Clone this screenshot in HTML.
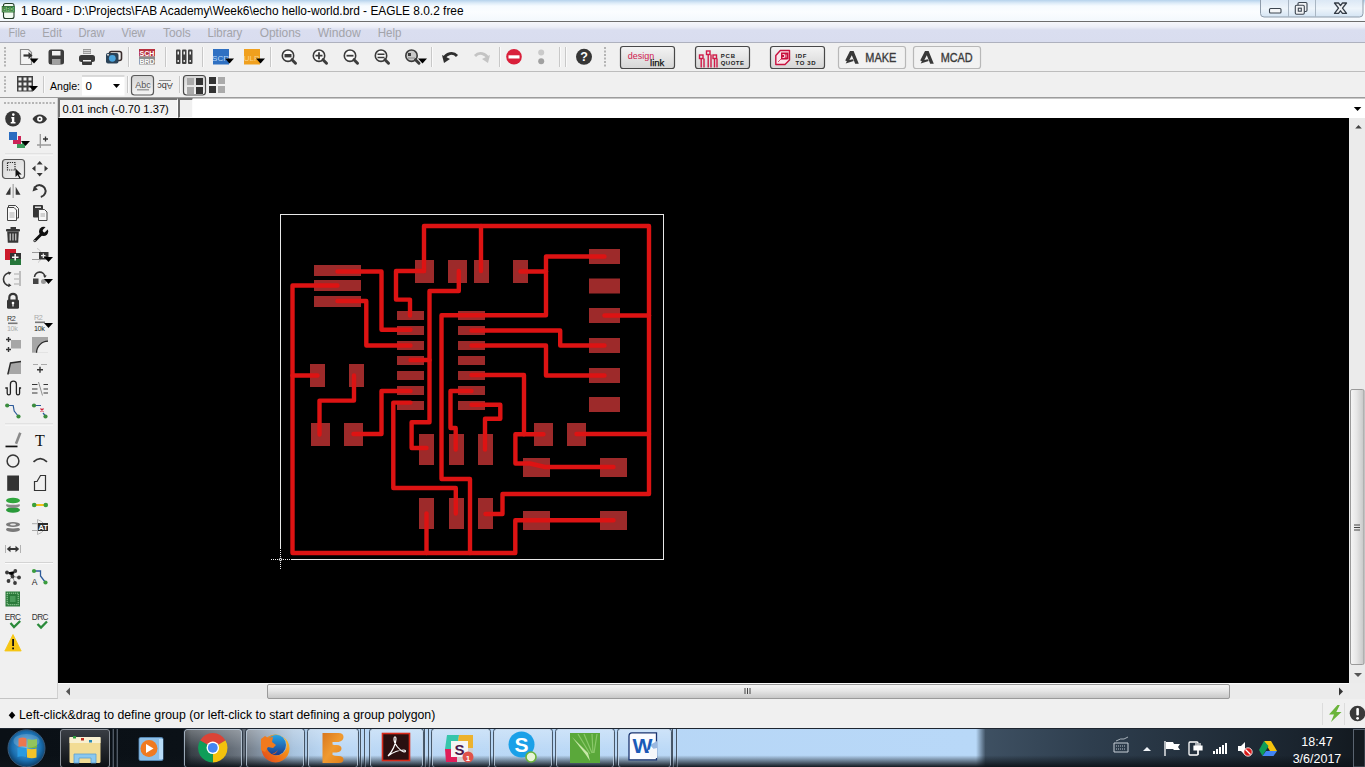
<!DOCTYPE html>
<html><head><meta charset="utf-8">
<style>
*{box-sizing:border-box}
html,body{margin:0;padding:0;width:1365px;height:767px;overflow:hidden;background:#f0f0f0;font-family:"Liberation Sans",sans-serif;position:relative}
.a{position:absolute}
.t{position:absolute;white-space:pre;line-height:1}
#title{left:0;top:0;width:1365px;height:21px;background:linear-gradient(#b5d2ec 0px,#dcebf8 3px,#f6fbff 6px,#fbfdff 12px,#f4f9fd 20px)}
#tline{left:0;top:21px;width:1365px;height:1px;background:#6d6d6d}
#menu{left:0;top:22px;width:1365px;height:20px;background:linear-gradient(#f6f7fb 0px,#eceef7 5px,#dadef0 8px,#d9ddef 19px)}
#mline{left:0;top:42px;width:1365px;height:1px;background:#aeb1be}
.mi{position:absolute;top:27px;font-size:12.5px;color:#a2a3a8;white-space:pre;line-height:1}
#tb1{left:0;top:43px;width:1365px;height:28px;background:#f0f0f0}
#tb1line{left:0;top:71px;width:1365px;height:1px;background:#bdbdbd;box-shadow:0 1px 0 #fdfdfd}
#tb2{left:0;top:72px;width:1365px;height:25px;background:#f0f0f0}
#tb2line{left:0;top:97px;width:1365px;height:1px;background:#9c9c9c;box-shadow:0 1px 0 #c4c4c4}
#cmd{left:193px;top:98px;width:1172px;height:20px;background:#fff;border-top:1px solid #c8c8c8}
#coord{left:58px;top:98px;width:120px;height:20px;background:#f2f2f2;border-left:2px solid #757575;border-top:2px solid #757575;border-right:1px solid #fcfcfc;border-bottom:1px solid #fcfcfc}
#coord2{left:178px;top:98px;width:15px;height:20px;background:#f0f0f0;border-left:2px solid #6a6a6a;border-top:2px solid #757575;border-right:1px solid #fcfcfc;border-bottom:1px solid #fcfcfc}
#canvas{left:58px;top:118px;width:1291px;height:565px;background:#000}
#vs{left:1349px;top:118px;width:16px;height:565px;background:#ebebeb}
#hs{left:58px;top:683px;width:1291px;height:16px;background:#ebebeb}
#lp{left:0;top:98px;width:58px;height:601px;background:#f0f0f0;border-right:1px solid #d0d0d0;border-bottom:1px solid #c4c4c4}
#status{left:0;top:699px;width:1365px;height:29px;background:#f0f0f0}
#task{left:0;top:728px;width:1365px;height:39px;background:#1b2530}
.sep{position:absolute;width:1px;background:#c9c9c9}
.hsep{position:absolute;height:1px;background:#cfcfcf}
</style></head><body>
<div id="title" class="a"></div>
<div id="tline" class="a"></div>
<div id="menu" class="a"></div>
<div id="mline" class="a"></div>
<div class="t" style="left:21px;top:6px;font-size:11.9px;color:#000">1 Board - D:\Projects\FAB Academy\Week6\echo hello-world.brd - EAGLE 8.0.2 free</div>
<svg width="420" height="45" style="position:absolute;left:0;top:0" font-family="Liberation Sans, sans-serif"><text x="8.6" y="36.6" font-size="12.4" fill="#a3a4aa" textLength="17.2" lengthAdjust="spacingAndGlyphs">File</text><text x="42.3" y="36.6" font-size="12.4" fill="#a3a4aa" textLength="19.5" lengthAdjust="spacingAndGlyphs">Edit</text><text x="78.5" y="36.6" font-size="12.4" fill="#a3a4aa" textLength="26.1" lengthAdjust="spacingAndGlyphs">Draw</text><text x="121.5" y="36.6" font-size="12.4" fill="#a3a4aa" textLength="23.9" lengthAdjust="spacingAndGlyphs">View</text><text x="163" y="36.6" font-size="12.4" fill="#a3a4aa" textLength="27.8" lengthAdjust="spacingAndGlyphs">Tools</text><text x="207.4" y="36.6" font-size="12.4" fill="#a3a4aa" textLength="34.9" lengthAdjust="spacingAndGlyphs">Library</text><text x="259.7" y="36.6" font-size="12.4" fill="#a3a4aa" textLength="41.1" lengthAdjust="spacingAndGlyphs">Options</text><text x="317.7" y="36.6" font-size="12.4" fill="#a3a4aa" textLength="43.1" lengthAdjust="spacingAndGlyphs">Window</text><text x="377.7" y="36.6" font-size="12.4" fill="#a3a4aa" textLength="23.8" lengthAdjust="spacingAndGlyphs">Help</text></svg>
<div id="tb1" class="a"></div>
<div id="tb1line" class="a"></div>
<div id="tb2" class="a"></div>
<div id="tb2line" class="a"></div>
<div id="lp" class="a"></div>
<div id="coord" class="a"></div>
<div id="coord2" class="a"></div>
<div id="cmd" class="a"></div>
<div class="t" style="left:62.5px;top:103.8px;font-size:11.2px;color:#000">0.01 inch (-0.70 1.37)</div>
<div id="canvas" class="a"></div>
<div id="vs" class="a"></div>
<div id="hs" class="a"></div>
<div id="status" class="a"></div>
<div class="t" style="left:19px;top:709px;font-size:12.3px;color:#000">Left-click&amp;drag to define group (or left-click to start defining a group polygon)</div>
<div id="task" class="a"></div>
<svg width="1365" height="767" style="position:absolute;left:0;top:0" font-family="Liberation Sans, sans-serif">
<rect x="4" y="47" width="2" height="2" fill="#b4b4b4"/>
<rect x="4" y="50.5" width="2" height="2" fill="#b4b4b4"/>
<rect x="4" y="54.0" width="2" height="2" fill="#b4b4b4"/>
<rect x="4" y="57.5" width="2" height="2" fill="#b4b4b4"/>
<rect x="4" y="61.0" width="2" height="2" fill="#b4b4b4"/>
<rect x="4" y="64.5" width="2" height="2" fill="#b4b4b4"/>
<rect x="4" y="76" width="2" height="2" fill="#b4b4b4"/>
<rect x="4" y="79.5" width="2" height="2" fill="#b4b4b4"/>
<rect x="4" y="83.0" width="2" height="2" fill="#b4b4b4"/>
<rect x="4" y="86.5" width="2" height="2" fill="#b4b4b4"/>
<rect x="4" y="90.0" width="2" height="2" fill="#b4b4b4"/>
<rect x="604" y="47" width="2" height="2" fill="#b4b4b4"/>
<rect x="604" y="50.5" width="2" height="2" fill="#b4b4b4"/>
<rect x="604" y="54.0" width="2" height="2" fill="#b4b4b4"/>
<rect x="604" y="57.5" width="2" height="2" fill="#b4b4b4"/>
<rect x="604" y="61.0" width="2" height="2" fill="#b4b4b4"/>
<rect x="604" y="64.5" width="2" height="2" fill="#b4b4b4"/>
<rect x="4" y="102" width="2" height="2" fill="#b4b4b4"/>
<rect x="7.5" y="102" width="2" height="2" fill="#b4b4b4"/>
<rect x="11.0" y="102" width="2" height="2" fill="#b4b4b4"/>
<rect x="14.5" y="102" width="2" height="2" fill="#b4b4b4"/>
<rect x="18.0" y="102" width="2" height="2" fill="#b4b4b4"/>
<rect x="21.5" y="102" width="2" height="2" fill="#b4b4b4"/>
<rect x="25.0" y="102" width="2" height="2" fill="#b4b4b4"/>
<rect x="28.5" y="102" width="2" height="2" fill="#b4b4b4"/>
<rect x="32.0" y="102" width="2" height="2" fill="#b4b4b4"/>
<rect x="35.5" y="102" width="2" height="2" fill="#b4b4b4"/>
<rect x="39.0" y="102" width="2" height="2" fill="#b4b4b4"/>
<rect x="42.5" y="102" width="2" height="2" fill="#b4b4b4"/>
<rect x="46.0" y="102" width="2" height="2" fill="#b4b4b4"/>
<rect x="49.5" y="102" width="2" height="2" fill="#b4b4b4"/>
<rect x="53.0" y="102" width="2" height="2" fill="#b4b4b4"/>
<rect x="128" y="47" width="1" height="20" fill="#c8c8c8"/><rect x="129" y="47" width="1" height="20" fill="#fafafa"/>
<rect x="165" y="47" width="1" height="20" fill="#c8c8c8"/><rect x="166" y="47" width="1" height="20" fill="#fafafa"/>
<rect x="202" y="47" width="1" height="20" fill="#c8c8c8"/><rect x="203" y="47" width="1" height="20" fill="#fafafa"/>
<rect x="270" y="47" width="1" height="20" fill="#c8c8c8"/><rect x="271" y="47" width="1" height="20" fill="#fafafa"/>
<rect x="431" y="47" width="1" height="20" fill="#c8c8c8"/><rect x="432" y="47" width="1" height="20" fill="#fafafa"/>
<rect x="499" y="47" width="1" height="20" fill="#c8c8c8"/><rect x="500" y="47" width="1" height="20" fill="#fafafa"/>
<rect x="559" y="47" width="1" height="20" fill="#c8c8c8"/><rect x="560" y="47" width="1" height="20" fill="#fafafa"/>
<rect x="565" y="47" width="1" height="20" fill="#c8c8c8"/><rect x="566" y="47" width="1" height="20" fill="#fafafa"/>
<rect x="43" y="76" width="1" height="17" fill="#c8c8c8"/><rect x="44" y="76" width="1" height="17" fill="#fafafa"/>
<rect x="127" y="76" width="1" height="17" fill="#c8c8c8"/><rect x="128" y="76" width="1" height="17" fill="#fafafa"/>
<rect x="179" y="76" width="1" height="17" fill="#c8c8c8"/><rect x="180" y="76" width="1" height="17" fill="#fafafa"/>
<path d="M20.5,49.5h8l3,3v12h-11z" fill="#f4f4f4" stroke="#8a8a8a" stroke-width="1.2"/>
<path d="M23.5,55.5h6" stroke="#333" stroke-width="2.2"/><path d="M28.5,52l4,3.5l-4,3.5z" fill="#333"/>
<path d="M29.5,58.5h9l-4.5,5z" fill="#000"/>
<rect x="48.5" y="49.5" width="15.5" height="15" rx="2.5" fill="#3c3c3c"/>
<rect x="52" y="51" width="8.5" height="4.5" fill="#f0f0f0"/><rect x="52" y="59" width="8.5" height="5.5" fill="#a0a0a0"/>
<rect x="83" y="49" width="8" height="5" fill="#9a9a9a"/><path d="M83.5,50.5h7M83.5,52.5h7" stroke="#f0f0f0" stroke-width="0.7"/>
<rect x="79" y="55" width="16" height="7" rx="2.5" fill="#3a3a3a"/><rect x="82" y="61" width="10" height="4" rx="1" fill="#3a3a3a"/><rect x="83" y="60" width="8" height="1.5" fill="#f0f0f0"/>
<rect x="109.5" y="51.5" width="12" height="9" rx="2" fill="none" stroke="#3a2e2e" stroke-width="1.6"/>
<rect x="106" y="53" width="12.5" height="10.5" rx="2" fill="#2b4257"/><circle cx="112.3" cy="58.3" r="3.4" fill="#4aa3dc"/><rect x="107" y="54" width="2" height="1.5" fill="#d0d0d0"/>
<rect x="139" y="49" width="16" height="7.5" fill="#b7303e"/><rect x="139" y="56.5" width="16" height="8" fill="#8c8c8c"/>
<text x="147" y="55.6" font-size="7" font-weight="bold" fill="#fff" text-anchor="middle">SCH</text><text x="147" y="63.5" font-size="7" font-weight="bold" fill="#fff" text-anchor="middle">BRD</text>
<rect x="176" y="49.5" width="4.5" height="14.5" rx="1" fill="#404040"/><rect x="177.5" y="51.5" width="1.5" height="3" fill="#f0f0f0"/><rect x="177.5" y="60" width="1.5" height="2" fill="#e0e0e0"/>
<rect x="182" y="49.5" width="4.5" height="14.5" rx="1" fill="#404040"/><rect x="183.5" y="51.5" width="1.5" height="3" fill="#f0f0f0"/><rect x="183.5" y="60" width="1.5" height="2" fill="#e0e0e0"/>
<rect x="188" y="49.5" width="4.5" height="14.5" rx="1" fill="#404040"/><rect x="189.5" y="51.5" width="1.5" height="3" fill="#f0f0f0"/><rect x="189.5" y="60" width="1.5" height="2" fill="#e0e0e0"/>
<rect x="213" y="49" width="16" height="15.5" fill="#2f70c2"/><text x="220.5" y="60.5" font-size="8" fill="#b8d8f8" text-anchor="middle">SCR</text>
<path d="M225,58.5h9l-4.5,5z" fill="#000"/>
<rect x="244" y="49" width="16" height="15.5" fill="#f0a01e"/><text x="251.5" y="60.5" font-size="8" fill="#fbd38a" text-anchor="middle">ULP</text>
<path d="M256,58.5h9l-4.5,5z" fill="#000"/>
<circle cx="288" cy="55.7" r="5.7" fill="#fafafa" stroke="#3a3a3a" stroke-width="1.6"/>
<path d="M292,59.7l3.5,3.5" stroke="#3c3c3c" stroke-width="3" stroke-linecap="round"/>
<rect x="284.5" y="54" width="7" height="3.4" fill="#3c3c3c"/>
<circle cx="319" cy="55.7" r="5.7" fill="#fafafa" stroke="#3a3a3a" stroke-width="1.6"/>
<path d="M323,59.7l3.5,3.5" stroke="#3c3c3c" stroke-width="3" stroke-linecap="round"/>
<path d="M315.5,55.7h7M319,52.2v7" stroke="#3c3c3c" stroke-width="1.8"/>
<circle cx="350" cy="55.7" r="5.7" fill="#fafafa" stroke="#3a3a3a" stroke-width="1.6"/>
<path d="M354,59.7l3.5,3.5" stroke="#3c3c3c" stroke-width="3" stroke-linecap="round"/>
<path d="M346.5,55.7h7" stroke="#3c3c3c" stroke-width="1.8"/>
<circle cx="381" cy="55.7" r="5.7" fill="#fafafa" stroke="#3a3a3a" stroke-width="1.6"/>
<path d="M385,59.7l3.5,3.5" stroke="#3c3c3c" stroke-width="3" stroke-linecap="round"/>
<path d="M377.5,54.2h7M377.5,57.4h7" stroke="#3c3c3c" stroke-width="1.5"/>
<circle cx="411.5" cy="55.7" r="5.7" fill="#c8c8c8" stroke="#3a3a3a" stroke-width="1.6"/>
<path d="M415.5,59.7l3.5,3.5" stroke="#3c3c3c" stroke-width="3" stroke-linecap="round"/>
<rect x="408" y="53" width="3" height="3" fill="#3c3c3c"/><path d="M408,58h7" stroke="#888" stroke-width="1"/>
<path d="M418,58.5h9l-4.5,5z" fill="#000"/>
<path d="M444,58.5c2-5,9-7,13-2.5" fill="none" stroke="#2e2e2e" stroke-width="2.8"/><path d="M442,55l2,8l6-4z" fill="#2e2e2e"/>
<path d="M488,58.5c-2-5,-9-7,-13-2.5" fill="none" stroke="#c4c4c4" stroke-width="2.8"/><path d="M490,55l-2,8l-6-4z" fill="#c4c4c4"/>
<circle cx="514" cy="56.8" r="7.8" fill="#d91f3a"/><rect x="508.5" y="55.3" width="11" height="3.2" fill="#fff"/>
<circle cx="541.2" cy="52.4" r="3" fill="#cacaca"/><circle cx="541.2" cy="61.3" r="3" fill="#a0a0a0"/>
<circle cx="584" cy="56.8" r="8" fill="#363636"/><text x="584" y="61.3" font-size="12.5" font-weight="bold" fill="#fff" text-anchor="middle">?</text>
<defs><linearGradient id="gbtn" x1="0" y1="0" x2="0" y2="1"><stop offset="0" stop-color="#f4f4f4"/><stop offset="1" stop-color="#d6d6d6"/></linearGradient><linearGradient id="gbtn2" x1="0" y1="0" x2="0" y2="1"><stop offset="0" stop-color="#d4d4d4"/><stop offset="1" stop-color="#f6f6f6"/></linearGradient></defs>
<rect x="620.5" y="46.5" width="54" height="22" rx="2.5" fill="url(#gbtn)" stroke="#484848" stroke-width="1.2"/>
<rect x="695.5" y="46.5" width="54" height="22" rx="2.5" fill="url(#gbtn)" stroke="#484848" stroke-width="1.2"/>
<rect x="770.5" y="46.5" width="54" height="22" rx="2.5" fill="url(#gbtn)" stroke="#484848" stroke-width="1.2"/>
<rect x="838.5" y="46.5" width="67" height="22" rx="2.5" fill="#f2f2f2" stroke="#b8b8b8" stroke-width="1.2"/>
<rect x="913.5" y="46.5" width="67" height="22" rx="2.5" fill="#f2f2f2" stroke="#b8b8b8" stroke-width="1.2"/>
<text x="627.8" y="58.5" font-size="9.5" fill="#d0204e" textLength="26.5" lengthAdjust="spacingAndGlyphs">design</text><text x="650" y="65.8" font-size="9.5" fill="#111" stroke="#111" stroke-width="0.25" textLength="14.4" lengthAdjust="spacingAndGlyphs">link</text>
<g fill="none" stroke="#d01a48" stroke-width="1.4"><rect x="699.5" y="55" width="3.5" height="3.5"/><rect x="706.5" y="51" width="3.5" height="3.5"/><rect x="713" y="55" width="3.5" height="3.5"/><path d="M701.2,58.5v9M704,58.5v9M708.2,54.5v13M711,54.5v13M714.5,58.5v9M717,58.5v9"/></g>
<text x="720.7" y="57.9" font-size="6" font-weight="bold" fill="#222" textLength="14.3" lengthAdjust="spacing">PCB</text><text x="720.7" y="64.8" font-size="6" font-weight="bold" fill="#222" textLength="23.3" lengthAdjust="spacing">QUOTE</text>
<path d="M775.8,55.5l4.5,-5h9.2v9.5l-4.5,4.5h-9.2z" fill="#fbe4ea" stroke="#c8103e" stroke-width="1.4" stroke-linejoin="round"/><rect x="781" y="52.5" width="7.5" height="6.8" fill="#c8103e"/><path d="M782.5,54.5h2v3M786,54.5v3M784.5,57.5h-2" stroke="#fff" stroke-width="0.8" fill="none"/><path d="M778,62l3,-3h6" stroke="#c8103e" stroke-width="0.7" fill="none"/>
<text x="795.5" y="57.9" font-size="6" font-weight="bold" fill="#222" textLength="11" lengthAdjust="spacing">IDF</text><text x="795.5" y="64.8" font-size="6" font-weight="bold" fill="#222" textLength="20" lengthAdjust="spacing">TO 3D</text>
<path d="M845.2,60.5l4.8,-9.5h3.6l5.2,12.8h-3.6l-3.4,-8.6l-3.3,6.5z" fill="#383838"/><path d="M845.7,63.5l1.5,-3l5.5,-1.2l1,1.6z" fill="#383838"/>
<path d="M920.2,60.5l4.8,-9.5h3.6l5.2,12.8h-3.6l-3.4,-8.6l-3.3,6.5z" fill="#383838"/><path d="M920.7,63.5l1.5,-3l5.5,-1.2l1,1.6z" fill="#383838"/>
<text x="865.3" y="62" font-size="12.5" fill="#3a3a3a" stroke="#3a3a3a" stroke-width="0.35" textLength="31" lengthAdjust="spacingAndGlyphs">MAKE</text>
<text x="940.7" y="62" font-size="12.5" fill="#3a3a3a" stroke="#3a3a3a" stroke-width="0.35" textLength="32" lengthAdjust="spacingAndGlyphs">MCAD</text>
<rect x="17" y="76" width="16" height="15.5" fill="#404040"/>
<rect x="18.5" y="77.5" width="3" height="3" fill="#f0f0f0"/>
<rect x="18.5" y="82.5" width="3" height="3" fill="#f0f0f0"/>
<rect x="18.5" y="87.5" width="3" height="3" fill="#f0f0f0"/>
<rect x="23.5" y="77.5" width="3" height="3" fill="#f0f0f0"/>
<rect x="23.5" y="82.5" width="3" height="3" fill="#f0f0f0"/>
<rect x="23.5" y="87.5" width="3" height="3" fill="#f0f0f0"/>
<rect x="28.5" y="77.5" width="3" height="3" fill="#f0f0f0"/>
<rect x="28.5" y="82.5" width="3" height="3" fill="#f0f0f0"/>
<rect x="28.5" y="87.5" width="3" height="3" fill="#f0f0f0"/>
<path d="M29,86h9l-4.5,5z" fill="#000"/>
<text x="50" y="89.8" font-size="11.5" fill="#000" textLength="30" lengthAdjust="spacingAndGlyphs">Angle:</text>
<rect x="82" y="75.5" width="42.5" height="20" fill="#fff"/><rect x="82" y="75.5" width="42.5" height="1" fill="#b8b8b8"/>
<text x="85.5" y="89.8" font-size="11.5" fill="#000">0</text>
<path d="M113,84h7l-3.5,4z" fill="#000"/>
<rect x="131.5" y="75.5" width="22" height="19.5" rx="3" fill="url(#gbtn2)" stroke="#5a5a5a" stroke-width="1.2"/>
<text x="143" y="87.6" font-size="9" fill="#555" text-anchor="middle">Abc</text><rect x="137" y="89.2" width="12" height="1.2" fill="#8a8a8a"/>
<g transform="translate(165,86.2) rotate(180)"><text x="0" y="3.3" font-size="9" fill="#333" text-anchor="middle">Abc</text></g><rect x="159" y="80" width="12" height="1" fill="#8a8a8a"/>
<rect x="183.5" y="75.5" width="22" height="19.5" rx="3" fill="url(#gbtn2)" stroke="#4a4a4a" stroke-width="1.2"/>
<rect x="187" y="78" width="7" height="7" fill="#aaaaaa"/><rect x="196" y="78" width="7" height="7" fill="#333"/><rect x="187" y="87" width="7" height="7" fill="#aaaaaa"/><rect x="196" y="87" width="7" height="7" fill="#333"/>
<rect x="209" y="77" width="7" height="7" fill="#333"/><rect x="218" y="77" width="7" height="7" fill="#aaaaaa"/><rect x="209" y="86" width="7" height="7" fill="#333"/><rect x="218" y="86" width="7" height="7" fill="#aaaaaa"/>
</svg><svg width="1365" height="767" style="position:absolute;left:0;top:0" font-family="Liberation Sans, sans-serif">
<rect x="5" y="153.5" width="48" height="1" fill="#d4d4d4"/><rect x="5" y="154.5" width="48" height="1" fill="#fbfbfb"/>
<rect x="5" y="423.5" width="48" height="1" fill="#d4d4d4"/><rect x="5" y="424.5" width="48" height="1" fill="#fbfbfb"/>
<rect x="5" y="562" width="48" height="1" fill="#d4d4d4"/><rect x="5" y="563" width="48" height="1" fill="#fbfbfb"/>
<circle cx="13" cy="118.7" r="7.8" fill="#363636"/><circle cx="13.3" cy="114.6" r="1.3" fill="#fff"/><path d="M11.3,117h3v5h1.2v1.5h-4.8v-1.5h1.2v-3.5h-0.6z" fill="#fff"/>
<path d="M32.5,119c3-6,11.5-6,14.5,0c-3,6-11.5,6-14.5,0z" fill="#363636"/><circle cx="39.8" cy="119" r="2.7" fill="#fff"/><circle cx="39.8" cy="119" r="1.1" fill="#363636"/>
<rect x="9" y="132" width="8" height="8" fill="#2a6cc0"/><path d="M13,140h5v-4h3v8h-8z" fill="#cc2457"/><path d="M17,144h5v-3h3v7h-8z" fill="#3c9a5c"/><path d="M21,141h9l-4.5,5z" fill="#000"/>
<path d="M40.3,134v14M37,145h14" stroke="#9a9a9a" stroke-width="1.3"/><path d="M43,139h5M45.5,136.5v5" stroke="#333" stroke-width="1.3"/>
<defs><linearGradient id="gsel" x1="0" y1="0" x2="1" y2="1"><stop offset="0" stop-color="#d4d4d4"/><stop offset="1" stop-color="#f2f2f2"/></linearGradient></defs>
<rect x="2.5" y="159.5" width="22" height="19" rx="3" fill="url(#gsel)" stroke="#555" stroke-width="1.2"/>
<rect x="7.5" y="162.5" width="7.5" height="7.5" fill="none" stroke="#222" stroke-width="1.2" stroke-dasharray="1.2,1"/>
<path d="M15.5,168.5l0,8.5l2-2l2,3.5l1.2-0.7l-2-3.3h3z" fill="#111"/>
<g fill="#363636"><path d="M39.7,161l-3,3.5h6z"/><path d="M39.7,176.5l-3,-3.5h6z"/><path d="M32,168.6l3.5,-3v6z"/><path d="M48,168.6l-3.5,-3v6z"/></g>
<path d="M5.7,194.8l4.8,-8v8z" fill="#363636"/><path d="M20.5,194.8l-4.8,-8v8z" fill="#363636"/><rect x="12.5" y="184" width="1.3" height="14" fill="#a8a8a8"/>
<path d="M34.8,187.5a6,6 0 1 1 6,9.5" fill="none" stroke="#363636" stroke-width="2"/><path d="M32.5,191.5l1.5,-5.5l4,3.5z" fill="#363636"/>
<path d="M8.5,205.5h7l3,3v9.5h-10z" fill="#f4f4f4" stroke="#444" stroke-width="1"/>
<path d="M7.5,207.5h6.5l2.5,2.5v10.5h-9z" fill="#f8f8f8" stroke="#444" stroke-width="1"/><path d="M9.5,213h5M9.5,215h5M9.5,217h5" stroke="#999" stroke-width="0.8"/>
<rect x="33" y="205" width="10" height="12.5" rx="1" fill="#363636"/><rect x="35" y="206.5" width="6" height="1.5" fill="#ddd"/>
<path d="M38.5,209.5h6l2.5,2.5v8.5h-8.5z" fill="#f6f6f6" stroke="#444" stroke-width="1"/><path d="M40.5,214h4.5M40.5,216h4.5" stroke="#999" stroke-width="0.8"/>
<rect x="10.5" y="227" width="5.5" height="2.5" fill="#363636"/><rect x="6" y="229" width="14" height="2.5" rx="0.8" fill="#363636"/><path d="M7.2,231.5h11.6l-0.6,11.2h-10.4z" fill="#363636"/>
<path d="M10.2,233.5v7M13,233.5v7M15.8,233.5v7" stroke="#f0f0f0" stroke-width="1"/>
<path d="M34.8,240.8l7.5,-7.5" stroke="#111" stroke-width="2.8" stroke-linecap="round"/><circle cx="43.6" cy="231.4" r="4.6" fill="#111"/><path d="M44.3,230.7l5,-5" stroke="#f0f0f0" stroke-width="3.2" stroke-linecap="round"/><circle cx="34.9" cy="240.7" r="0.7" fill="#f0f0f0"/>
<rect x="5" y="249" width="11" height="11" fill="#cc1a2b"/><rect x="10" y="253" width="11" height="6" fill="#333"/><rect x="10" y="259" width="11" height="6" fill="#26763a"/><path d="M12,257.3h6.5M15.2,254v6.5" stroke="#f4f4f4" stroke-width="1.6"/>
<path d="M32,252.5h7M32,259.5h7" stroke="#9a9a9a" stroke-width="1"/><path d="M37,248.5c5,1,6,11,1,14" fill="none" stroke="#bbb" stroke-width="0.8"/>
<rect x="39" y="252" width="9.5" height="7.5" fill="#363636"/><path d="M41,255.7h4.5M43.3,253.5v4.5" stroke="#f0f0f0" stroke-width="1.2"/><path d="M44,257h9l-4.5,5z" fill="#000"/>
<path d="M10.2,272.8a6,6 0 0 0 -0.5,13" fill="none" stroke="#363636" stroke-width="1.6"/><path d="M8,271.5l3.5,1l-2.5,2.5z M8,287l3.5,-1.5l-2.8,-2.2z" fill="#363636"/>
<path d="M14,274h5M14,279h5M14,284h5" stroke="#aaa" stroke-width="1.2"/><rect x="19" y="271" width="2" height="15" fill="#bdbdbd"/>
<path d="M34.5,277a5.3,5.3 0 0 1 10.5,-0.5" fill="none" stroke="#363636" stroke-width="1.6"/><path d="M43,275.5h3.8l-2,2.5z" fill="#363636"/><rect x="33" y="278.5" width="5.5" height="5.5" fill="#444"/><circle cx="43.5" cy="281.5" r="2.5" fill="#999"/><path d="M44,279h9l-4.5,5z" fill="#000"/>
<path d="M9.3,300v-2.5a3.7,3.7 0 0 1 7.4,0v2.5" fill="none" stroke="#363636" stroke-width="2.2"/><rect x="7" y="299.5" width="12" height="9.3" rx="1.5" fill="#363636"/><circle cx="13" cy="303" r="1.3" fill="#fff"/><rect x="12.4" y="303" width="1.2" height="3.5" fill="#fff"/>
<text x="7" y="320.8" font-size="7.2" fill="#333" letter-spacing="-0.4">R2</text><rect x="8" y="322.5" width="9.5" height="1.6" fill="#777"/><text x="7" y="331" font-size="7.2" fill="#aaa" letter-spacing="-0.4">10k</text>
<text x="34" y="320.3" font-size="7.2" fill="#aaa" letter-spacing="-0.4">R2</text><rect x="35" y="321.5" width="10" height="1.6" fill="#777"/><text x="34" y="330.5" font-size="7.2" fill="#222" letter-spacing="-0.4">10k</text><path d="M44,323h9l-4.5,5z" fill="#000"/>
<path d="M6,339.5h5M8.5,337v5M6,349.5h5M8.5,347v5" stroke="#363636" stroke-width="1.4"/><rect x="11" y="340" width="10" height="8.5" fill="#a6a6a6"/>
<rect x="32" y="337" width="16" height="15.7" fill="#a6a6a6"/><path d="M36.5,352.7a11.7,11.7 0 0 1 11.5,-11.5v11.5z" fill="#f0f0f0"/><path d="M36.5,352.7a11.7,11.7 0 0 1 11.5,-11.5" fill="none" stroke="#2a2a2a" stroke-width="1.3"/>
<path d="M10.5,363l10.5,-1.5v12.5h-13.5z" fill="#a6a6a6"/><path d="M7.8,374.5l2.7,-11.5l10.5,-1.5" fill="none" stroke="#2a2a2a" stroke-width="1.4"/>
<path d="M33,364.5h5M41,364.5h6" stroke="#aaa" stroke-width="1.1"/><path d="M37,369.7h6M40,366.7v6" stroke="#363636" stroke-width="1.4"/>
<path d="M5.3,388h1.9v5.2a1.6,1.6 0 0 0 3.2,0v-9a3,3 0 0 1 6,0v9a1.6,1.6 0 0 0 3.2,0v-5.2h1.5" fill="none" stroke="#222" stroke-width="1.3"/>
<path d="M32,384.5h5.5M32,389h5.5M32,393h5.5M43.5,384.5h4.5M43.5,389h4.5M43.5,393h4.5" stroke="#363636" stroke-width="1.2"/><path d="M38.5,382l4,13.5" stroke="#777" stroke-width="0.8"/>
<path d="M7.2,405.5h6l1,5.5l4.3,5.5" fill="none" stroke="#2c5a9a" stroke-width="1.2"/><circle cx="7.2" cy="405.5" r="2.1" fill="#3b8c3e"/><circle cx="18.5" cy="416.5" r="2.1" fill="#3b8c3e"/>
<path d="M34,405.5h7M43,413l3,3.5" fill="none" stroke="#2c5a9a" stroke-width="1.2"/><path d="M40.5,408.5l3,3M43.5,408.5l-3,3" stroke="#d0203a" stroke-width="1.2"/><circle cx="34" cy="405.5" r="2.1" fill="#3b8c3e"/><circle cx="45.5" cy="416.5" r="2.1" fill="#3b8c3e"/>
<rect x="5.5" y="445.6" width="12" height="1.7" fill="#111"/><path d="M20.3,432.8l-4.3,11" stroke="#8a8a8a" stroke-width="2.6"/>
<text x="40" y="445.5" font-family="Liberation Serif, serif" font-size="16" fill="#111" text-anchor="middle">T</text>
<circle cx="13" cy="461" r="5.9" fill="none" stroke="#363636" stroke-width="1.5"/><path d="M33.5,461.8q6.7,-6.5 13.5,0" fill="none" stroke="#363636" stroke-width="1.7"/>
<rect x="7.2" y="475.5" width="11.8" height="15.3" fill="#333"/><path d="M34.5,490.5v-9h2.5l3.5,-6h5v15z" fill="none" stroke="#333" stroke-width="1.2"/>
<ellipse cx="13" cy="510" rx="7" ry="2.8" fill="#2a9a3a"/><ellipse cx="13" cy="505.3" rx="7" ry="2.6" fill="#8a8a8a"/><ellipse cx="13" cy="503.5" rx="7" ry="1.3" fill="#f4f4f4"/><ellipse cx="13" cy="500.5" rx="7" ry="2.8" fill="#2fa63c"/>
<path d="M34.2,505h11.6" stroke="#f2c21a" stroke-width="2"/><circle cx="34.2" cy="505" r="2.3" fill="#3aa03a"/><circle cx="45.8" cy="505" r="2.3" fill="#3aa03a"/>
<ellipse cx="13" cy="529.5" rx="7" ry="2.6" fill="#7a7a7a"/><ellipse cx="13" cy="527.2" rx="7" ry="1.2" fill="#f0f0f0"/><ellipse cx="13" cy="524.5" rx="7" ry="2.6" fill="#7a7a7a"/><ellipse cx="13" cy="524.5" rx="3" ry="1" fill="#e8e8e8"/>
<path d="M32,523.7h6M32,530.5h6" stroke="#aaa" stroke-width="1"/><path d="M37.5,519.5v15M37.5,519.5q5,2 6,4M37.5,534.5q5,-2 6,-4" fill="none" stroke="#aaa" stroke-width="0.8"/><rect x="38" y="523" width="10" height="8" fill="#2a2a2a"/><text x="43" y="530.3" font-size="7.5" font-weight="bold" fill="#fff" text-anchor="middle" letter-spacing="-0.3">AT</text>
<path d="M9,549h8" stroke="#363636" stroke-width="2"/><path d="M6.8,549l3.7,-3.3v6.6z M19.2,549l-3.7,-3.3v6.6z" fill="#363636"/><path d="M5.5,545v8M20.5,545v8" stroke="#aaa" stroke-width="0.9"/>
<path d="M7,572.5L12.5,576.5L15.3,571M12.5,576.5L19,577.5M12.5,576.5L8.5,581M12.5,576.5L15,583" stroke="#777" stroke-width="0.8"/>
<circle cx="7" cy="572.5" r="1.9" fill="#3a3a3a"/>
<circle cx="15.3" cy="571" r="1.9" fill="#3a3a3a"/>
<circle cx="19" cy="577.5" r="1.9" fill="#3a3a3a"/>
<circle cx="8.5" cy="581" r="1.9" fill="#3a3a3a"/>
<circle cx="15" cy="583" r="1.9" fill="#3a3a3a"/>
<circle cx="12.5" cy="576.5" r="1.9" fill="#3a3a3a"/>
<path d="M34,571h6.5v5l5,6.5" fill="none" stroke="#2c5a9a" stroke-width="1.3"/><circle cx="34" cy="571" r="2.1" fill="#3b9c3e"/><circle cx="45.5" cy="582.5" r="2.1" fill="#3b9c3e"/><text x="34.5" y="585" font-size="8.5" fill="#222" text-anchor="middle">A</text>
<rect x="5.5" y="591.5" width="14.5" height="15" fill="#2a7a3a"/><rect x="7.2" y="593.2" width="11" height="11.5" fill="none" stroke="#c8f0c8" stroke-width="0.9" stroke-dasharray="1,1"/><rect x="10" y="596" width="5.5" height="6" fill="#4a9a5a"/>
<text x="4.8" y="620.3" font-size="8.3" fill="#333" letter-spacing="-0.6">ERC</text><path d="M10.5,623l3.5,4l6.2,-6" fill="none" stroke="#2a8a3a" stroke-width="2.3"/>
<text x="31.8" y="620.3" font-size="8.3" fill="#333" letter-spacing="-0.6">DRC</text><path d="M37.5,624l3.5,3.5l6,-6" fill="none" stroke="#2a8a3a" stroke-width="2.3"/>
<path d="M13,634.5l8.2,16.5h-16.4z" fill="#f6c614" stroke="#f6c614" stroke-width="0.8" stroke-linejoin="round"/><rect x="12.2" y="639" width="1.8" height="7" fill="#111"/><rect x="12.2" y="647.5" width="1.8" height="1.8" fill="#111"/>
</svg><svg width="1365" height="767" style="position:absolute;left:0;top:0" font-family="Liberation Sans, sans-serif">
<defs>
<linearGradient id="hth" x1="0" y1="0" x2="0" y2="1"><stop offset="0" stop-color="#f6f6f6"/><stop offset="0.45" stop-color="#e6e6e6"/><stop offset="1" stop-color="#c6c6c6"/></linearGradient>
<linearGradient id="vth" x1="0" y1="0" x2="1" y2="0"><stop offset="0" stop-color="#f6f6f6"/><stop offset="0.45" stop-color="#e6e6e6"/><stop offset="1" stop-color="#c6c6c6"/></linearGradient>
<linearGradient id="wbtn" x1="0" y1="0" x2="0" y2="1"><stop offset="0" stop-color="#dbe8f5"/><stop offset="0.5" stop-color="#eef5fb"/><stop offset="1" stop-color="#d4e4f3"/></linearGradient>
<radialGradient id="orb" cx="0.5" cy="0.45" r="0.55"><stop offset="0" stop-color="#5ab0e8"/><stop offset="0.7" stop-color="#1a6fb0"/><stop offset="1" stop-color="#0d3d66"/></radialGradient>
<linearGradient id="tbtn" x1="0" y1="0" x2="0" y2="1"><stop offset="0" stop-color="#d8e8f8"/><stop offset="0.55" stop-color="#b9d5f0"/><stop offset="1" stop-color="#2a3440"/></linearGradient>
<linearGradient id="tbtnd" x1="0" y1="0" x2="0" y2="1"><stop offset="0" stop-color="#5a6068"/><stop offset="0.5" stop-color="#2a3038"/><stop offset="1" stop-color="#10161c"/></linearGradient>
</defs>
<rect x="3.5" y="3.5" width="10.5" height="15" rx="2" fill="#f2fbf2" stroke="#1f3a26" stroke-width="1.1"/><rect x="2.2" y="6.5" width="12" height="5.5" fill="#8ed08a" stroke="#2a6a32" stroke-width="0.9"/><text x="8.2" y="11.3" font-size="5" font-weight="bold" fill="#2a6a32" text-anchor="middle">BRD</text>
<path d="M1260.5,0v13.5a3.5,3.5 0 0 0 3.5,3.5h95.5a3.5,3.5 0 0 0 3.5,-3.5v-13.5" fill="url(#wbtn)" stroke="#8e9cab" stroke-width="1"/>
<path d="M1288.5,0v17M1315.5,0v17" stroke="#a9b6c3" stroke-width="1"/>
<rect x="1269.5" y="8.5" width="11.5" height="4.5" rx="1" fill="#f4f6f8" stroke="#3c4650" stroke-width="1.1"/>
<rect x="1298" y="2.5" width="9" height="9" rx="1.2" fill="#f0f2f4" stroke="#3c4650" stroke-width="1.1"/><rect x="1295.3" y="5.2" width="9" height="9" rx="1.2" fill="#f0f2f4" stroke="#3c4650" stroke-width="1.1"/><rect x="1298.3" y="8.2" width="3" height="3" fill="none" stroke="#3c4650" stroke-width="1.1"/>
<path d="M1334.5,3h4l2,2.6l2,-2.6h4l-4,5.2l4,5.2h-4l-2,-2.6l-2,2.6h-4l4,-5.2z" fill="#eef1f4" stroke="#343c46" stroke-width="1.3" stroke-linejoin="round"/>
<path d="M1353.8,107h7.5l-3.75,4z" fill="#000"/>
<path d="M1355.2,128.6h6.6l-3.3,-3.6z" fill="#444"/>
<rect x="1350.5" y="389.5" width="13.5" height="275" rx="1.5" fill="url(#vth)" stroke="#9a9a9a" stroke-width="1"/>
<path d="M1354,525h6M1354,527.5h6M1354,530h6" stroke="#444" stroke-width="1"/>
<path d="M1354,673h8l-4,4z" fill="#555"/>
<rect x="1349" y="683" width="16" height="16" fill="#ececec"/>
<path d="M70,687.5v8l-4,-4z" fill="#555"/>
<rect x="267.5" y="684.5" width="962" height="14" rx="1.5" fill="url(#hth)" stroke="#9a9a9a" stroke-width="1"/>
<path d="M745,688v6M747.5,688v6M750,688v6" stroke="#444" stroke-width="1"/>
<path d="M1339,687.5v8l4,-4z" fill="#333"/>
<rect x="58" y="683" width="1291" height="1" fill="#fafafa"/>
<path d="M12,711.5l3.3,3.8l-3.3,3.8l-3.3,-3.8z" fill="#000"/>
<path d="M1322.5,703v22M1344.5,703v22" stroke="#dcdcdc" stroke-width="1"/>
<path d="M1337.5,705l-8.5,9.5h5l-3,7.5l10.5,-10h-5.2l3.5,-7z" fill="#6ab43a"/>
<circle cx="1357.5" cy="713.5" r="7.8" fill="#3a3a3a"/><rect x="1356.3" y="708" width="2.6" height="7.5" rx="1" fill="#fff"/><circle cx="1357.6" cy="718.3" r="1.4" fill="#fff"/>
</svg><svg width="1365" height="767" style="position:absolute;left:0;top:0">
<rect x="280.5" y="214.5" width="383" height="345" fill="none" stroke="#e8e8e8" stroke-width="1"/>
<g fill="#9d2a2a">
<rect x="314" y="265" width="47" height="11"/>
<rect x="314" y="280" width="47" height="11"/>
<rect x="314" y="296" width="47" height="11"/>
<rect x="415" y="260" width="19" height="23"/>
<rect x="448" y="260" width="19" height="23"/>
<rect x="474" y="260" width="15" height="23"/>
<rect x="513" y="260" width="15" height="23"/>
<rect x="589" y="249" width="31" height="15"/>
<rect x="589" y="278.5" width="31" height="15"/>
<rect x="589" y="308" width="31" height="15"/>
<rect x="589" y="338" width="31" height="15"/>
<rect x="589" y="368" width="31" height="15"/>
<rect x="589" y="397" width="31" height="15"/>
<rect x="397" y="311" width="27" height="9"/>
<rect x="458" y="311" width="27" height="9"/>
<rect x="397" y="326" width="27" height="9"/>
<rect x="458" y="326" width="27" height="9"/>
<rect x="397" y="341" width="27" height="9"/>
<rect x="458" y="341" width="27" height="9"/>
<rect x="397" y="356" width="27" height="9"/>
<rect x="458" y="356" width="27" height="9"/>
<rect x="397" y="371" width="27" height="9"/>
<rect x="458" y="371" width="27" height="9"/>
<rect x="397" y="386" width="27" height="9"/>
<rect x="458" y="386" width="27" height="9"/>
<rect x="397" y="401" width="27" height="9"/>
<rect x="458" y="401" width="27" height="9"/>
<rect x="310" y="364" width="15" height="23"/>
<rect x="349" y="364" width="15" height="23"/>
<rect x="311" y="423" width="19" height="23"/>
<rect x="344" y="423" width="19" height="23"/>
<rect x="419" y="434" width="15" height="31"/>
<rect x="449" y="434" width="15" height="31"/>
<rect x="478" y="434" width="15" height="31"/>
<rect x="534" y="423" width="19" height="23"/>
<rect x="567" y="423" width="19" height="23"/>
<rect x="523" y="458" width="27" height="19"/>
<rect x="600" y="458" width="27" height="19"/>
<rect x="419" y="498" width="15" height="31"/>
<rect x="449" y="498" width="15" height="31"/>
<rect x="478" y="498" width="15" height="31"/>
<rect x="523" y="511" width="27" height="19"/>
<rect x="600" y="511" width="27" height="19"/>
</g>
<g fill="none" stroke="#dd1313" stroke-width="4.4" stroke-linecap="round" stroke-linejoin="round">
<polyline points="424,271 424,226 649,226 649,494 502.5,494 502.5,514 485.5,514"/>
<polyline points="481,226 481,271"/>
<polyline points="424,271 396,271 396,299.6 410,299.6 410,315.5"/>
<polyline points="604.5,315.5 649,315.5"/>
<polyline points="576.5,434 649,434"/>
<polyline points="458.8,271 458.8,291 429.5,291 429.5,422.3 411.6,422.3 411.6,448 426.5,448"/>
<polyline points="410.5,360 429.5,360"/>
<polyline points="337.5,271.5 381.5,271.5 381.5,329.8 410.5,329.8"/>
<polyline points="337.5,285.5 292.5,285.5 292.5,553 515.3,553 515.3,520.3 613.5,520.3"/>
<polyline points="426.5,513.5 426.5,553"/>
<polyline points="470,553 470,479 441.5,479 441.5,315.3 546,315.3 546,256.5 604.5,256.5"/>
<polyline points="520.5,271.5 546,271.5"/>
<polyline points="292.5,375.5 317.5,375.5"/>
<polyline points="337.5,301 366.3,301 366.3,345.5 410.5,345.5"/>
<polyline points="410.5,391 381.5,391 381.5,434 353.5,434"/>
<polyline points="410.5,402.6 393.3,402.6 393.3,488 455.8,488 455.8,513.5"/>
<polyline points="354,375.5 354,400.6 319.5,400.6 319.5,434.5"/>
<polyline points="471.5,330.5 560.2,330.5 560.2,345.5 604.5,345.5"/>
<polyline points="471.5,345.5 546,345.5 546,375.5 604.5,375.5"/>
<polyline points="471.5,375 524,375 524,434.3 543.5,434.3"/>
<polyline points="524,434.3 515.4,434.3 515.4,463.5 530,463.5 545,467 613.5,467"/>
<polyline points="471.5,391 450.5,391 450.5,428 455.7,428 455.7,449.5"/>
<polyline points="471.5,404.7 500.3,404.7 500.3,418.8 485,418.8 485,449.5"/>
</g>
<rect x="279" y="549" width="3" height="21" fill="#000"/><rect x="270" y="558" width="21" height="3" fill="#000"/><g fill="#f0f0f0"><rect x="271" y="559" width="1" height="1"/><rect x="273" y="559" width="1" height="1"/><rect x="275" y="559" width="1" height="1"/><rect x="277" y="559" width="1" height="1"/><rect x="279" y="559" width="1" height="1"/><rect x="281" y="559" width="1" height="1"/><rect x="283" y="559" width="1" height="1"/><rect x="285" y="559" width="1" height="1"/><rect x="287" y="559" width="1" height="1"/><rect x="289" y="559" width="1" height="1"/><rect x="280" y="550" width="1" height="1"/><rect x="280" y="552" width="1" height="1"/><rect x="280" y="554" width="1" height="1"/><rect x="280" y="556" width="1" height="1"/><rect x="280" y="558" width="1" height="1"/><rect x="280" y="560" width="1" height="1"/><rect x="280" y="562" width="1" height="1"/><rect x="280" y="564" width="1" height="1"/><rect x="280" y="566" width="1" height="1"/><rect x="280" y="568" width="1" height="1"/></g><circle cx="280.5" cy="559.5" r="1.3" fill="none" stroke="#e0e0e0" stroke-width="0.7"/>
</svg><svg width="1365" height="767" style="position:absolute;left:0;top:0" font-family="Liberation Sans, sans-serif">
<defs>
<linearGradient id="tkbg" x1="0" y1="0" x2="1365" y2="0" gradientUnits="userSpaceOnUse">
<stop offset="0" stop-color="#0a1016"/><stop offset="0.135" stop-color="#0b1117"/><stop offset="0.14" stop-color="#2c343c"/>
<stop offset="0.18" stop-color="#69737f"/><stop offset="0.215" stop-color="#a2bfdc"/><stop offset="0.24" stop-color="#b6d5f4"/>
<stop offset="0.715" stop-color="#b8d8f8"/><stop offset="0.722" stop-color="#3e5062"/><stop offset="0.8" stop-color="#2e3e4e"/><stop offset="0.95" stop-color="#1a242e"/><stop offset="1" stop-color="#12181e"/>
</linearGradient>
<linearGradient id="tkv" x1="0" y1="0" x2="0" y2="1"><stop offset="0" stop-color="#0e141a" stop-opacity="0"/><stop offset="0.7" stop-color="#0e141a" stop-opacity="0"/><stop offset="1" stop-color="#0e141a" stop-opacity="0.97"/></linearGradient>
<linearGradient id="glass" x1="0" y1="0" x2="0" y2="1"><stop offset="0" stop-color="#fff" stop-opacity="0.32"/><stop offset="0.5" stop-color="#fff" stop-opacity="0.08"/><stop offset="1" stop-color="#fff" stop-opacity="0"/></linearGradient>
<radialGradient id="orb" cx="0.5" cy="0.4" r="0.6"><stop offset="0" stop-color="#8cc8ee"/><stop offset="0.5" stop-color="#2a7cc0"/><stop offset="0.85" stop-color="#1a5a96"/><stop offset="1" stop-color="#5a8ab0"/></radialGradient>
<linearGradient id="expl" x1="0" y1="0" x2="0" y2="1"><stop offset="0" stop-color="#3a3e44"/><stop offset="1" stop-color="#0c1014"/></linearGradient>
</defs>
<rect x="0" y="728" width="1365" height="39" fill="url(#tkbg)"/>
<rect x="0" y="728" width="1365" height="39" fill="url(#tkv)"/>
<rect x="0" y="728" width="1365" height="1" fill="#1e2630"/>
<circle cx="26.5" cy="748.3" r="18.5" fill="url(#orb)" stroke="#3a5a7a" stroke-width="1"/>
<path d="M18.5,738.5q4,-2 8,0v8.5q-4,-1.5 -8,0z" fill="#e8582a"/><path d="M27.5,739q4.5,1.5 9.5,0v8.5q-5,1.5 -9.5,0z" fill="#7ab83a"/><path d="M17.5,748q4,-1.5 8.5,0v9q-4.5,-1.5 -8.5,0z" fill="#2a9ae0"/><path d="M27,748.5q5,1.5 9.5,0v9q-4.5,1.5 -9.5,0z" fill="#f4c42a"/>
<ellipse cx="26.5" cy="741" rx="13" ry="7" fill="#fff" fill-opacity="0.18"/>
<rect x="60.5" y="729.5" width="49" height="38" rx="2.5" fill="url(#expl)" stroke="#8a9098" stroke-width="1"/>
<rect x="184.5" y="729.5" width="57" height="38" rx="2.5" fill="url(#glass)" stroke="#c8d8e8" stroke-opacity="0.75" stroke-width="1"/>
<rect x="183.5" y="728.5" width="59" height="39" rx="3" fill="none" stroke="#1a2430" stroke-opacity="0.7" stroke-width="1"/>
<rect x="246.5" y="729.5" width="57" height="38" rx="2.5" fill="url(#glass)" stroke="#c8d8e8" stroke-opacity="0.75" stroke-width="1"/>
<rect x="245.5" y="728.5" width="59" height="39" rx="3" fill="none" stroke="#1a2430" stroke-opacity="0.7" stroke-width="1"/>
<rect x="308.5" y="729.5" width="49" height="38" rx="2.5" fill="url(#glass)" stroke="#c8d8e8" stroke-opacity="0.75" stroke-width="1"/>
<rect x="307.5" y="728.5" width="51" height="39" rx="3" fill="none" stroke="#1a2430" stroke-opacity="0.7" stroke-width="1"/>
<rect x="370.5" y="729.5" width="52" height="38" rx="2.5" fill="url(#glass)" stroke="#c8d8e8" stroke-opacity="0.75" stroke-width="1"/>
<rect x="369.5" y="728.5" width="54" height="39" rx="3" fill="none" stroke="#1a2430" stroke-opacity="0.7" stroke-width="1"/>
<rect x="432.5" y="729.5" width="57" height="38" rx="2.5" fill="url(#glass)" stroke="#c8d8e8" stroke-opacity="0.75" stroke-width="1"/>
<rect x="431.5" y="728.5" width="59" height="39" rx="3" fill="none" stroke="#1a2430" stroke-opacity="0.7" stroke-width="1"/>
<rect x="494.5" y="729.5" width="57" height="38" rx="2.5" fill="url(#glass)" stroke="#c8d8e8" stroke-opacity="0.75" stroke-width="1"/>
<rect x="493.5" y="728.5" width="59" height="39" rx="3" fill="none" stroke="#1a2430" stroke-opacity="0.7" stroke-width="1"/>
<rect x="556.5" y="729.5" width="57" height="38" rx="2.5" fill="url(#glass)" stroke="#c8d8e8" stroke-opacity="0.75" stroke-width="1"/>
<rect x="555.5" y="728.5" width="59" height="39" rx="3" fill="none" stroke="#1a2430" stroke-opacity="0.7" stroke-width="1"/>
<rect x="618.5" y="729.5" width="52" height="38" rx="2.5" fill="url(#glass)" stroke="#c8d8e8" stroke-opacity="0.75" stroke-width="1"/>
<rect x="617.5" y="728.5" width="54" height="39" rx="3" fill="none" stroke="#1a2430" stroke-opacity="0.7" stroke-width="1"/>
<rect x="112" y="729" width="1" height="38" fill="#2a3440" fill-opacity="0.8"/><rect x="113" y="729" width="1" height="38" fill="#d0e0f0" fill-opacity="0.35"/>
<rect x="116" y="729" width="1" height="38" fill="#2a3440" fill-opacity="0.8"/><rect x="117" y="729" width="1" height="38" fill="#d0e0f0" fill-opacity="0.35"/>
<rect x="360" y="729" width="1" height="38" fill="#2a3440" fill-opacity="0.8"/><rect x="361" y="729" width="1" height="38" fill="#d0e0f0" fill-opacity="0.35"/>
<rect x="364" y="729" width="1" height="38" fill="#2a3440" fill-opacity="0.8"/><rect x="365" y="729" width="1" height="38" fill="#d0e0f0" fill-opacity="0.35"/>
<rect x="424" y="729" width="1" height="38" fill="#2a3440" fill-opacity="0.8"/><rect x="425" y="729" width="1" height="38" fill="#d0e0f0" fill-opacity="0.35"/>
<rect x="428" y="729" width="1" height="38" fill="#2a3440" fill-opacity="0.8"/><rect x="429" y="729" width="1" height="38" fill="#d0e0f0" fill-opacity="0.35"/>
<rect x="672" y="729" width="1" height="38" fill="#2a3440" fill-opacity="0.8"/><rect x="673" y="729" width="1" height="38" fill="#d0e0f0" fill-opacity="0.35"/>
<rect x="676" y="729" width="1" height="38" fill="#2a3440" fill-opacity="0.8"/><rect x="677" y="729" width="1" height="38" fill="#d0e0f0" fill-opacity="0.35"/>
<rect x="69.5" y="737" width="31" height="26" rx="1.5" fill="#f2dc94"/><rect x="69.5" y="737" width="31" height="6" fill="#f8f0d0"/><rect x="73" y="736" width="3" height="2.5" fill="#2a9a3a"/><rect x="81" y="738" width="3" height="2.5" fill="#c03020"/><rect x="89" y="740" width="3" height="2.5" fill="#2a8ab0"/>
<path d="M74,763v-9h22v9h-5v-5h-12v5z" fill="#8ac8f0" stroke="#5aa0d0" stroke-width="0.8"/>
<rect x="139" y="737.5" width="24" height="23" rx="1.5" fill="#8ec0e8" stroke="#5a90c0" stroke-width="0.8"/><rect x="159" y="739" width="4" height="20" fill="#b8dcf8"/><circle cx="149" cy="748.5" r="8.5" fill="#f07a20"/><path d="M146,744v9l7.5,-4.5z" fill="#fff"/>
<path d="M212.8,747.8L200.07,740.45A14.7,14.7 0 0 1 225.53,740.45z" fill="#db4437"/>
<path d="M212.8,747.8L225.53,740.45A14.7,14.7 0 0 1 212.80,762.50z" fill="#f4c20d"/>
<path d="M212.8,747.8L212.80,762.50A14.7,14.7 0 0 1 200.07,740.45z" fill="#0f9d58"/>
<circle cx="212.8" cy="747.8" r="6.3" fill="#fff"/><circle cx="212.8" cy="747.8" r="4.9" fill="#4285f4"/>
<defs><linearGradient id="ffg" x1="0" y1="0" x2="0" y2="1"><stop offset="0" stop-color="#28a8e8"/><stop offset="1" stop-color="#1a3a8a"/></linearGradient><linearGradient id="ffo" x1="1" y1="0" x2="0" y2="1"><stop offset="0" stop-color="#f8d030"/><stop offset="0.4" stop-color="#f48a1a"/><stop offset="1" stop-color="#e0401a"/></linearGradient></defs>
<circle cx="275.5" cy="745" r="10.5" fill="url(#ffg)"/>
<path d="M275.5,734.5a14,14 0 1 1 -0.01,0z M276.5,735a10.2,10.2 0 1 0 0.01,0z" fill="url(#ffo)" fill-rule="evenodd"/>
<path d="M261,739l4,-3l3,2l5,-1l-1,5l4,3l-3,3l-5,-1l-3,5l-4,-2z" fill="#f07a1e"/><path d="M268,754q6,1 10,-4q-3,6 -10,4z" fill="#e8601a"/>
<defs><linearGradient id="eg" x1="0" y1="0" x2="1" y2="1"><stop offset="0" stop-color="#d87820"/><stop offset="0.5" stop-color="#f09a30"/><stop offset="1" stop-color="#e0801a"/></linearGradient></defs><path d="M322.5,733h16q5,0 5,4q0,4 -5,5h-6v2.5q1,0.5 4,0.5q5,0 5,3.5q0,3.5 -5,4h-4v2.5q2,1 6,1q5,0 5,3.5q0,3.5 -5,3.5h-16z" fill="url(#eg)"/>
<rect x="382.5" y="733.5" width="27" height="27" fill="#2a1010" stroke="#d82a1a" stroke-width="1.6"/><path d="M388,756c4,-4 8,-12 8,-17c0,-3 -2,-3 -2,0c0,5 6,12 10,13c2,0 2,-2 0,-2c-5,0 -12,3 -16,6z" fill="none" stroke="#fff" stroke-width="1.2"/>
<path d="M447,735h12l-2,14h-12z" fill="#36c5ab"/><path d="M459,735h14v13h-16z" fill="#ecb22e"/><path d="M445,749h12v13h-11z" fill="#e01e5a"/><path d="M457,748h16v8l-4,6h-12z" fill="#d0d0d0"/><rect x="451" y="741" width="17" height="16" fill="#f4f4f4"/><text x="459.5" y="755" font-size="15" font-weight="bold" fill="#4a154b" text-anchor="middle">S</text><circle cx="468" cy="757" r="5.5" fill="#e0524a"/><text x="468" y="760.5" font-size="8" font-weight="bold" fill="#fff" text-anchor="middle">1</text>
<circle cx="521.5" cy="744.5" r="13" fill="#1aa0e8"/><text x="521.5" y="752" font-size="21" font-weight="bold" fill="#fff" text-anchor="middle">S</text><circle cx="531" cy="757" r="5" fill="#e8f4d8" stroke="#6ab43a" stroke-width="1.6"/>
<rect x="570" y="733" width="30" height="30" fill="#5aa83a"/><path d="M572,737l14,18l4,6l-2,-8z" fill="#c8e8a8"/><path d="M578,734l12,20M584,734l8,19M592,734l1,19M597,734l-3,19" stroke="#8ac86a" stroke-width="1.2"/>
<path d="M632,732.8h24.5v27h-27.5v-23.5q0,-3.5 3,-3.5z" fill="#fbfcff" stroke="#1a3470" stroke-width="1.3"/><path d="M650,745l7,-4v12z" fill="#9ab8e0"/><text x="642.5" y="753.3" font-size="20" font-weight="bold" fill="#1a5ab8" text-anchor="middle" textLength="20" lengthAdjust="spacingAndGlyphs">W</text><path d="M648,750l9,-2v10l-6,0z" fill="#f4f6fa"/>
<path d="M1114,743h14v9h-14z" fill="none" stroke="#c8d0d8" stroke-width="1"/><path d="M1116,746h10M1116,749h10" stroke="#c8d0d8" stroke-width="0.9" stroke-dasharray="1,1"/><path d="M1116,741q5,-3 8,-2l4,-2" fill="none" stroke="#c8d0d8" stroke-width="0.8"/>
<path d="M1143,751h8l-4,-4z" fill="#f0f4f8"/>
<path d="M1165,741v15" stroke="#fff" stroke-width="1.3"/><path d="M1166,742h7l1,2h6l-2,3l2,3h-6l-1,-1h-7z" fill="#fff"/>
<rect x="1189" y="742" width="9" height="13" rx="1" fill="none" stroke="#fff" stroke-width="1.3"/><path d="M1194,746h8v4h-8z M1196,743v3M1200,743v3M1198,750v5" fill="#fff" stroke="#fff" stroke-width="1.2"/>
<rect x="1213" y="751" width="2" height="3" fill="#fff"/>
<rect x="1216" y="749" width="2" height="5" fill="#fff"/>
<rect x="1219" y="747" width="2" height="7" fill="#fff"/>
<rect x="1222" y="745" width="2" height="9" fill="#fff"/>
<rect x="1225" y="743" width="2" height="11" fill="#fff"/>
<path d="M1238,746h3l4,-4v13l-4,-4h-3z" fill="#fff"/><circle cx="1248" cy="752" r="4.2" fill="#d81a1a" stroke="#fff" stroke-width="0.8"/><path d="M1245.5,749.5l5,5" stroke="#fff" stroke-width="1.3"/>
<path d="M1264,741h7l6,10h-7z" fill="#f4c20d"/><path d="M1264,741l-5,9l3.5,6l6,-10z" fill="#0f9d58"/><path d="M1262.5,756h11l3.5,-5h-11z" fill="#4285f4"/>
<text x="1317" y="746.3" font-size="12.5" fill="#fff" text-anchor="middle">18:47</text><text x="1317" y="762.5" font-size="12.5" fill="#fff" text-anchor="middle">3/6/2017</text>
<rect x="1353.5" y="729.5" width="11.5" height="37.5" fill="#141a20" stroke="#5a6470" stroke-width="1"/>
</svg></body></html>
